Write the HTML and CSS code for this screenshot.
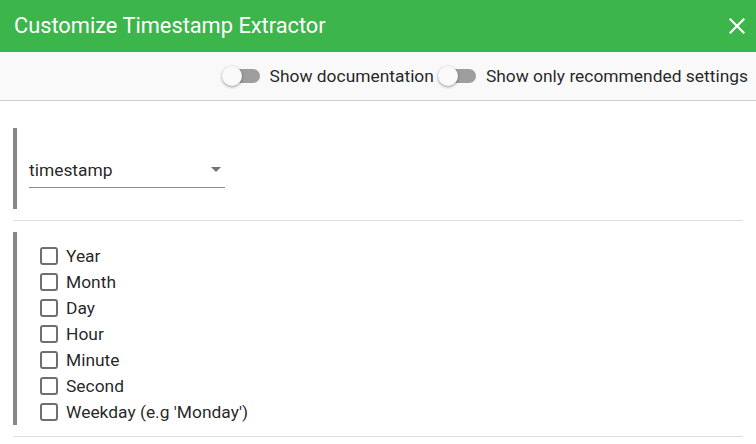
FILE: index.html
```html
<!DOCTYPE html>
<html>
<head>
<meta charset="utf-8">
<link rel="stylesheet" href="styles.css">
</head>
<body>
<div class="dialog">
  <header class="titlebar">
    <h1 class="title">Customize Timestamp Extractor</h1>
    <button class="close" aria-label="Close">
      <svg width="16" height="16" viewBox="0 0 16 16"><path d="M1.5 1.5 L14.5 14.5 M14.5 1.5 L1.5 14.5" stroke="#fff" stroke-width="2.2" stroke-linecap="square" fill="none"/></svg>
    </button>
  </header>
  <div class="toolbar">
    <label class="toggle"><span class="switch"><span class="track"></span><span class="thumb"></span></span><span class="toggle-text">Show documentation</span></label>
    <label class="toggle"><span class="switch"><span class="track"></span><span class="thumb"></span></span><span class="toggle-text">Show only recommended settings</span></label>
  </div>
  <main class="content">
    <section class="group group-select">
      <div class="select">
        <span class="select-value">timestamp</span>
        <span class="arrow"></span>
      </div>
    </section>
    <hr class="divider">
    <section class="group group-checks">
      <div class="check"><span class="box"></span><span class="check-label">Year</span></div>
      <div class="check"><span class="box"></span><span class="check-label">Month</span></div>
      <div class="check"><span class="box"></span><span class="check-label">Day</span></div>
      <div class="check"><span class="box"></span><span class="check-label">Hour</span></div>
      <div class="check"><span class="box"></span><span class="check-label">Minute</span></div>
      <div class="check"><span class="box"></span><span class="check-label">Second</span></div>
      <div class="check"><span class="box"></span><span class="check-label">Weekday (e.g 'Monday')</span></div>
    </section>
    <hr class="divider">
  </main>
</div>
</body>
</html>
```
FILE: styles.css
```css
* { box-sizing: border-box; }
html, body { margin: 0; padding: 0; background: #fff; }
body {
  font-family: Roboto, "Liberation Sans", sans-serif;
  color: rgba(0,0,0,0.87);
  width: 756px;
  height: 444px;
  overflow: hidden;
}
.titlebar {
  height: 52px;
  background: #3cb54b;
  display: flex;
  align-items: center;
  justify-content: space-between;
  padding: 0 9px 0 14px;
}
.title {
  margin: 0;
  font-size: 21.8px;
  font-weight: 400;
  color: #fff;
  letter-spacing: 0;
  padding-bottom: 1px;
}
.close {
  background: none;
  border: 0;
  padding: 0;
  width: 20px;
  height: 20px;
  display: flex;
  align-items: center;
  justify-content: center;
  margin-bottom: 1px;
}
.toolbar {
  height: 49px;
  background: #f9f9f9;
  border-bottom: 1px solid #cfcfcf;
  display: flex;
  align-items: center;
  justify-content: flex-end;
  padding-right: 8px;
  gap: 4px;
}
.toggle {
  display: flex;
  align-items: center;
  font-size: 17.4px;
}
.switch {
  position: relative;
  width: 38px;
  height: 20px;
  margin-right: 10px;
}
.track {
  position: absolute;
  left: 4px;
  top: 3px;
  width: 34px;
  height: 14px;
  border-radius: 7px;
  background: #9e9e9e;
}
.thumb {
  position: absolute;
  left: 0;
  top: 0;
  width: 20px;
  height: 20px;
  border-radius: 50%;
  background: #fafafa;
  box-shadow: 0 1px 3px rgba(0,0,0,0.4);
}
.toggle-text { line-height: 20px; }
.content {
  padding: 27px 13px 0 13px;
}
.group {
  border-left: 4px solid #888;
}
.group-select {
  height: 81px;
  display: flex;
  align-items: center;
  padding-left: 12px;
}
.select {
  width: 196px;
  height: 38px;
  border-bottom: 1px solid #8a8a8a;
  display: flex;
  align-items: center;
  justify-content: space-between;
  font-size: 17.4px;
  margin-top: 1px;
  padding-top: 3px;
}
.select-value { line-height: 20px; }
.arrow {
  width: 0;
  height: 0;
  border-left: 5px solid transparent;
  border-right: 5px solid transparent;
  border-top: 5px solid #757575;
  margin-right: 4px;
  margin-top: -2px;
}
.divider {
  border: 0;
  border-top: 1px solid #e0e0e0;
  margin: 11px 0;
}
.group-checks {
  padding: 11px 0 0 23px;
  height: 193px;
}
.check {
  display: flex;
  align-items: center;
  height: 26px;
  font-size: 17.4px;
}
.box {
  width: 18px;
  height: 18px;
  border: 2px solid #6f6f6f;
  border-radius: 3px;
  margin-right: 8px;
  flex: none;
}
```
